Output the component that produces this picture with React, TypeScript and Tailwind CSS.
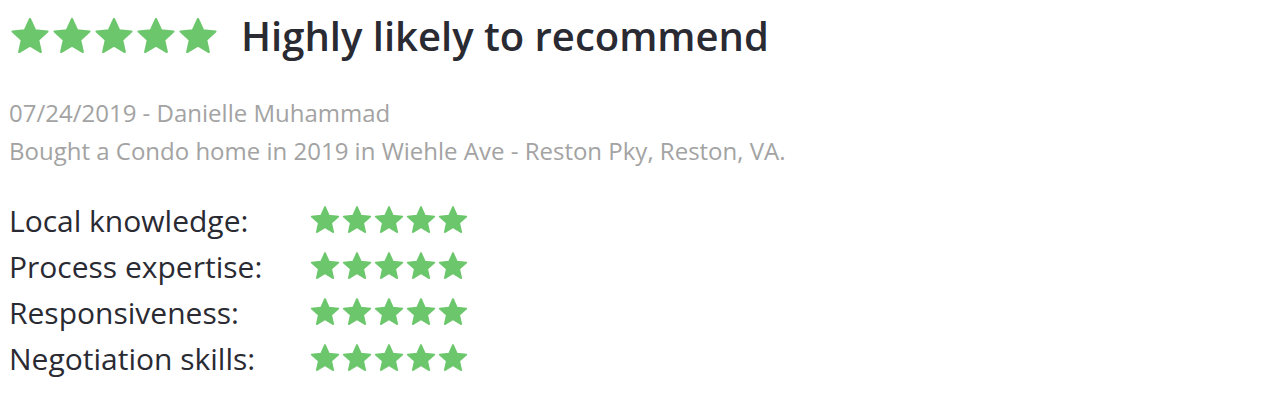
const STAR = "M12 2.2l2.95 6.5 7.05.75-5.3 4.75 1.5 6.95L12 17.55 5.8 21.15l1.5-6.95L2 9.45l7.05-.75z";

function Star({ size }: { size: number }) {
  return (
    <svg width={size} height={size} viewBox="0 0 24 24" className="shrink-0">
      <path d={STAR} fill="#6cc76c" stroke="#6cc76c" strokeWidth="1.2" strokeLinejoin="round" />
    </svg>
  );
}

function Stars({ size, count = 5 }: { size: number; count?: number }) {
  return (
    <div className="flex">
      {Array.from({ length: count }).map((_, i) => (
        <Star key={i} size={size} />
      ))}
    </div>
  );
}

const ratings = ["Local knowledge:", "Process expertise:", "Responsiveness:", "Negotiation skills:"];

export default function App() {
  return (
    <div className="min-h-[418px] w-full bg-white px-[9px] pt-[8px]" style={{ fontFamily: "'Open Sans', sans-serif" }}>
      <div className="flex items-center">
        <Stars size={42} />
        <h1 className="ml-[22px] text-[40px] font-semibold leading-[56px] text-[#2a2a33]">Highly likely to recommend</h1>
      </div>

      <div className="mt-[30px] text-[24px] leading-[38px] text-[#a3a3a3]">
        <p>07/24/2019 - Danielle Muhammad</p>
        <p>Bought a Condo home in 2019 in Wiehle Ave - Reston Pky, Reston, VA.</p>
      </div>

      <div className="mt-[27px] flex flex-col">
        {ratings.map((label) => (
          <div key={label} className="flex h-[46px] items-center">
            <span className="w-[300px] text-[30px] text-[#2a2a33]">{label}</span>
            <Stars size={32} />
          </div>
        ))}
      </div>
    </div>
  );
}
